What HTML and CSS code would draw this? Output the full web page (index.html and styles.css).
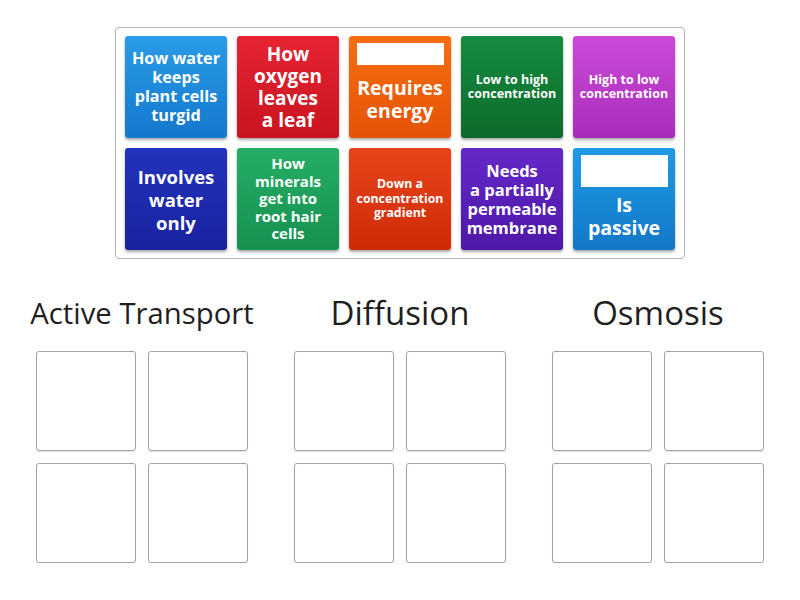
FILE: index.html
```html
<!DOCTYPE html>
<html>
<head>
<meta charset="utf-8">
<link rel="stylesheet" href="styles.css">
</head>
<body>
<div class="tray">
  <div class="tile c1"><div class="txt s16">How water<br>keeps<br>plant cells<br>turgid</div></div>
  <div class="tile c2"><div class="txt s19">How<br>oxygen<br>leaves<br>a leaf</div></div>
  <div class="tile c3 img-tile"><div class="pic pic-short"></div><div class="txt s195">Requires<br>energy</div></div>
  <div class="tile c4"><div class="txt s12">Low to high<br>concentration</div></div>
  <div class="tile c5"><div class="txt s12">High to low<br>concentration</div></div>
  <div class="tile c6"><div class="txt s19b">Involves<br>water<br>only</div></div>
  <div class="tile c7"><div class="txt s15">How<br>minerals<br>get into<br>root hair<br>cells</div></div>
  <div class="tile c8"><div class="txt s12b">Down a<br>concentration<br>gradient</div></div>
  <div class="tile c9"><div class="txt s165">Needs<br>a partially<br>permeable<br>membrane</div></div>
  <div class="tile c10 img-tile"><div class="pic pic-tall"></div><div class="txt s195">Is<br>passive</div></div>
</div>

<div class="groups">
  <div class="group">
    <div class="label small"><span>Active Transport</span></div>
    <div class="slots">
      <div class="slot"></div><div class="slot"></div>
      <div class="slot"></div><div class="slot"></div>
    </div>
  </div>
  <div class="group">
    <div class="label"><span>Diffusion</span></div>
    <div class="slots">
      <div class="slot"></div><div class="slot"></div>
      <div class="slot"></div><div class="slot"></div>
    </div>
  </div>
  <div class="group">
    <div class="label"><span>Osmosis</span></div>
    <div class="slots">
      <div class="slot"></div><div class="slot"></div>
      <div class="slot"></div><div class="slot"></div>
    </div>
  </div>
</div>
</body>
</html>
```

FILE: styles.css
```css
html, body {
  margin: 0;
  padding: 0;
  background: #ffffff;
  font-family: "Open Sans", "DejaVu Sans", sans-serif;
}

.tray {
  box-sizing: border-box;
  width: 570px;
  margin: 27px auto 0;
  padding: 8px 9px;
  border: 1px solid #b5b5b5;
  border-radius: 4px;
  display: grid;
  grid-template-columns: repeat(5, 102px);
  grid-auto-rows: 102px;
  gap: 10px;
}

.tile {
  border-radius: 3px;
  box-shadow: 0 2px 3px rgba(0, 0, 0, 0.35);
  display: flex;
  align-items: center;
  justify-content: center;
  color: #ffffff;
  text-align: center;
  font-weight: 700;
  white-space: nowrap;
}

.img-tile {
  flex-direction: column;
  justify-content: flex-start;
  padding-top: 7px;
  box-sizing: border-box;
}

.img-tile .txt {
  flex: 1;
  display: flex;
  align-items: center;
  justify-content: center;
  padding-bottom: 4px;
}

.pic {
  background: #ffffff;
  width: 87px;
  flex: none;
}
.pic-short { height: 22px; }
.pic-tall { height: 32px; }

.s12 { font-size: 12.5px; line-height: 14px; }
.s12b { font-size: 12.3px; line-height: 14.5px; }
.s15 { font-size: 15px; line-height: 17.5px; }
.s16 { font-size: 16.2px; line-height: 19px; }
.s165 { font-size: 16.5px; line-height: 19px; }
.s19 { font-size: 19px; line-height: 22px; }
.s19b { font-size: 18.5px; line-height: 23px; }
.s195 { font-size: 19.5px; line-height: 22.5px; }

.c1 { background: linear-gradient(#2a9ce9, #1478cc); }
.c2 { background: linear-gradient(#e62433, #c9141f); }
.c3 { background: linear-gradient(#f56f10, #e55208); }
.c4 { background: linear-gradient(#158c40, #0d6a2c); }
.c5 { background: linear-gradient(#cc4ada, #a82cba); }
.c6 { background: linear-gradient(#2233bd, #1a229f); }
.c7 { background: linear-gradient(#26ae66, #169050); }
.c8 { background: linear-gradient(#e8451c, #cf2a06); }
.c9 { background: linear-gradient(#6428c8, #4e18a8); }
.c10 { background: linear-gradient(#1e9ae6, #1278c8); }

.groups {
  width: 728px;
  margin: 24px auto 0;
  display: grid;
  grid-template-columns: repeat(3, 212px);
  column-gap: 46px;
}

.label {
  height: 56px;
  line-height: 60px;
  display: flex;
  justify-content: center;
  font-size: 33px;
  color: #1f1f1f;
  white-space: nowrap;
}
.label.small { font-size: 29.3px; }

.slots {
  margin-top: 12px;
  display: grid;
  grid-template-columns: repeat(2, 100px);
  grid-auto-rows: 100px;
  gap: 12px;
}

.slot {
  box-sizing: border-box;
  border: 1px solid #a3a3a3;
  border-radius: 3px;
  box-shadow: 0 1px 1px rgba(0, 0, 0, 0.12);
}
```
